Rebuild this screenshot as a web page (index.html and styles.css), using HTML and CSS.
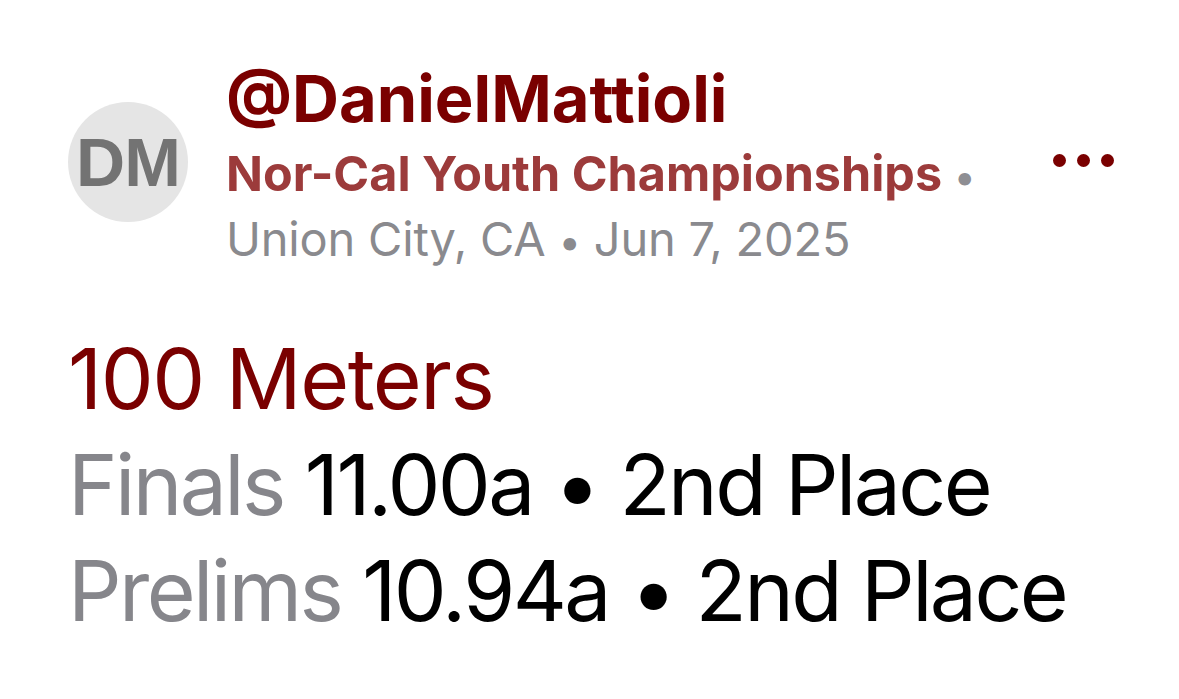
FILE: index.html
```html
<!DOCTYPE html>
<html lang="en">
<head>
<meta charset="utf-8">
<title>Result</title>
<link rel="stylesheet" href="styles.css">
</head>
<body>
<div class="card">
  <div class="header">
    <div class="avatar">DM</div>
    <div class="meta">
      <div class="handle">@DanielMattioli</div>
      <div class="meet"><span class="meet-name">Nor-Cal Youth Championships</span> <span class="dot">•</span></div>
      <div class="place">Union City, CA <span class="sep">•</span> Jun 7, 2025</div>
    </div>
    <div class="more">
      <svg width="61" height="13" viewBox="0 0 61 13"><circle cx="6.5" cy="6.5" r="6.5"/><circle cx="30.5" cy="6.5" r="6.5"/><circle cx="54.5" cy="6.5" r="6.5"/></svg>
    </div>
  </div>
  <div class="results">
    <div class="event">100 Meters</div>
    <div class="row"><span class="label">Finals</span> 11.00a • 2nd Place</div>
    <div class="row"><span class="label">Prelims</span> 10.94a • 2nd Place</div>
  </div>
</div>
</body>
</html>
```
FILE: styles.css
```css
html, body {
  margin: 0;
  padding: 0;
  background: #ffffff;
}
body {
  font-family: Inter, "Noto Sans", sans-serif;
  width: 1179px;
  height: 699px;
  overflow: hidden;
}
.card {
  padding: 64px 65px 0 68px;
}
.header {
  display: flex;
  align-items: flex-start;
}
.avatar {
  width: 120px;
  height: 120px;
  margin-top: 38px;
  border-radius: 50%;
  background: #e5e5e5;
  color: #737373;
  font-family: "Liberation Sans", Arial, sans-serif;
  font-weight: 700;
  font-size: 68px;
  letter-spacing: -1px;
  display: flex;
  align-items: center;
  justify-content: center;
  flex-shrink: 0;
}
.meta {
  margin-left: 38px;
  flex: 1;
}
.handle {
  font-size: 65px;
  line-height: 70px;
  font-weight: 700;
  color: #7a0000;
  white-space: nowrap;
}
.meet {
  font-size: 48.5px;
  line-height: 80px;
  font-weight: 700;
  color: #9c3b3b;
  white-space: nowrap;
}
.dot {
  color: #8e8e93;
  font-weight: 400;
  font-size: 40px;
}
.place {
  font-size: 47px;
  line-height: 44px;
  color: #8a8a8e;
  white-space: nowrap;
  letter-spacing: -0.2px;
}
.sep {
  font-size: 40px;
}
.more {
  margin-top: 90px;
  line-height: 0;
}
.more svg {
  fill: #7a0000;
}
.results {
  margin-top: 62px;
  font-size: 84px;
  line-height: 106px;
}
.event {
  color: #7a0000;
  letter-spacing: -1.5px;
}
.row {
  color: #000000;
  white-space: nowrap;
  letter-spacing: -2.6px;
}
.label {
  color: #86868b;
}
```
